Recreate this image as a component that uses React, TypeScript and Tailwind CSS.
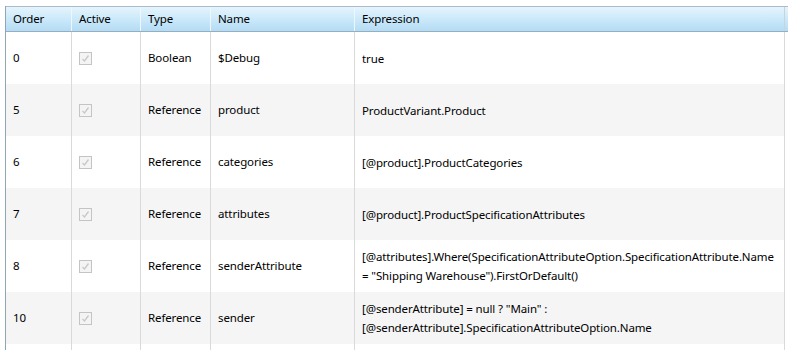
import React from "react";

type Row = { order: string; type: string; name: string; expr: string[] };

const rows: Row[] = [
  { order: "0", type: "Boolean", name: "$Debug", expr: ["true"] },
  { order: "5", type: "Reference", name: "product", expr: ["ProductVariant.Product"] },
  { order: "6", type: "Reference", name: "categories", expr: ["[@product].ProductCategories"] },
  { order: "7", type: "Reference", name: "attributes", expr: ["[@product].ProductSpecificationAttributes"] },
  {
    order: "8",
    type: "Reference",
    name: "senderAttribute",
    expr: [
      "[@attributes].Where(SpecificationAttributeOption.SpecificationAttribute.Name",
      '= "Shipping Warehouse").FirstOrDefault()',
    ],
  },
  {
    order: "10",
    type: "Reference",
    name: "sender",
    expr: ['[@senderAttribute] = null ? "Main" :', "[@senderAttribute].SpecificationAttributeOption.Name"],
  },
];

function Check() {
  return (
    <div className="w-[13px] h-[13px] border border-[#c4c4c4] bg-[#f4f4f4] flex items-center justify-center">
      <svg width="9" height="9" viewBox="0 0 9 9">
        <path d="M1.5 5 L3.5 7 L7.5 1.5" fill="none" stroke="#c8c8c8" strokeWidth="1.3" />
      </svg>
    </div>
  );
}

const cols = "grid grid-cols-[66px_69px_70px_144px_430px_3px]";

export default function App() {
  return (
    <div
      className="w-[788px] h-[350px] bg-white overflow-hidden pt-[6px] pl-[5px] text-[11.5px] tracking-[-0.12px] text-black"
      style={{ fontFamily: '"Noto Sans", "Open Sans", sans-serif' }}
    >
      <div className="border-l border-[#8fa5b8] h-[344px]">
        {/* header */}
        <div className={`${cols} h-[26px] border-t border-b border-t-[#a9bccb] border-b-[#97aebf] bg-[linear-gradient(#e6f4fd,#cbe9fa_50%,#b4dcf5)]`}>
          {["Order", "Active", "Type", "Name", "Expression"].map((h, i) => (
            <div
              key={h}
              className={`flex items-center pl-[7px] border-r ${i === 4 ? "border-[#c9d3da]" : "border-[#eef7fd]"}`}
            >
              {h}
            </div>
          ))}
          <div />
        </div>
        {rows.map((r, idx) => (
          <div key={r.order} className={`${cols} h-[52px]`}>
            <div className={`flex items-center pl-[7px] border-r border-[#dadada] ${idx % 2 === 1 ? "bg-[#f5f5f5]" : "bg-white"}`}>{r.order}</div>
            <div className={`flex items-center pl-[7px] border-r border-[#dadada] ${idx % 2 === 1 ? "bg-[#f5f5f5]" : "bg-white"}`}>
              <Check />
            </div>
            <div className={`flex items-center pl-[7px] border-r border-[#dadada] ${idx % 2 === 1 ? "bg-[#f5f5f5]" : "bg-white"}`}>{r.type}</div>
            <div className={`flex items-center pl-[7px] border-r border-[#dadada] ${idx % 2 === 1 ? "bg-[#f5f5f5]" : "bg-white"}`}>{r.name}</div>
            <div className={`flex flex-col justify-center pl-[7px] border-r border-[#dadada] leading-[19px] whitespace-nowrap overflow-hidden ${idx % 2 === 1 ? "bg-[#f5f5f5]" : "bg-white"}`}>
              {r.expr.map((l) => (
                <div key={l}>{l}</div>
              ))}
            </div>
            <div className="bg-white" />
          </div>
        ))}
        <div className={`${cols} h-[10px]`}>
          <div className="border-r border-[#dadada]" />
          <div className="border-r border-[#dadada]" />
          <div className="border-r border-[#dadada]" />
          <div className="border-r border-[#dadada]" />
          <div className="border-r border-[#dadada]" />
          <div />
        </div>
      </div>
    </div>
  );
}
